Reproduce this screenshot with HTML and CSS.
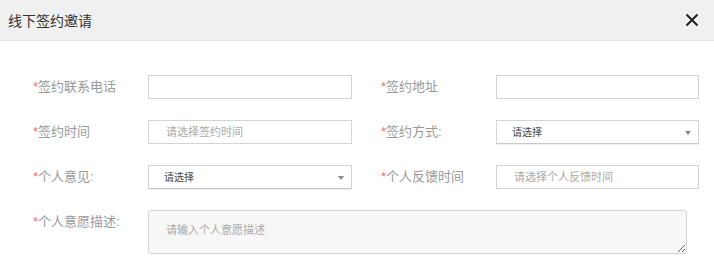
FILE: index.html
```html
<!DOCTYPE html>
<html lang="zh-CN">
<head>
    <meta charset="UTF-8">
    <meta name="viewport" content="width=device-width, initial-scale=1.0">
    <title>线下签约邀请</title>
    <link rel="stylesheet" href="styles.css">
</head>
<body>

    <div class="dialog">
        <!-- Dialog Header -->
        <div class="dialog-header">
            <h3>线下签约邀请</h3>
            <button class="close-btn" aria-label="关闭">
                <svg width="14" height="14" viewBox="0 0 14 14">
                    <path d="M1.5 1.5 L12.5 12.5 M12.5 1.5 L1.5 12.5" stroke="#222" stroke-width="2" fill="none"/>
                </svg>
            </button>
        </div>

        <!-- Form -->
        <form class="sign-form">
            <div class="field">
                <label><span class="req">*</span>签约联系电话</label>
                <input type="text" class="text-input">
            </div>
            <div class="field">
                <label><span class="req">*</span>签约地址</label>
                <input type="text" class="text-input">
            </div>

            <div class="field">
                <label><span class="req">*</span>签约时间</label>
                <input type="text" class="text-input date-input" placeholder="请选择签约时间">
            </div>
            <div class="field">
                <label><span class="req">*</span>签约方式:</label>
                <div class="select-wrap">
                    <select class="select-input">
                        <option>请选择</option>
                    </select>
                </div>
            </div>

            <div class="field">
                <label><span class="req">*</span>个人意见:</label>
                <div class="select-wrap">
                    <select class="select-input">
                        <option>请选择</option>
                    </select>
                </div>
            </div>
            <div class="field">
                <label><span class="req">*</span>个人反馈时间</label>
                <input type="text" class="text-input date-input" placeholder="请选择个人反馈时间">
            </div>

            <div class="field field-wide">
                <label><span class="req">*</span>个人意愿描述:</label>
                <textarea class="text-area" placeholder="请输入个人意愿描述"></textarea>
            </div>
        </form>
    </div>

</body>
</html>
```

FILE: styles.css
```css
/* General Styling */
body {
    margin: 0;
    padding: 0;
    background-color: #fff;
    font-family: "Liberation Sans", "Noto Sans CJK SC", sans-serif;
    color: #333;
}

/* Dialog Header */
.dialog-header {
    height: 40px;
    background-color: #f0f0f0;
    border-bottom: 1px solid #e4e4e4;
    display: flex;
    align-items: center;
    justify-content: space-between;
    padding: 0 15px 0 8px;
}

.dialog-header h3 {
    margin: 0;
    font-size: 14px;
    font-weight: normal;
    color: #333;
}

.close-btn {
    border: none;
    background: none;
    padding: 0;
    width: 14px;
    height: 14px;
    cursor: pointer;
    display: flex;
}

/* Form */
.sign-form {
    display: grid;
    grid-template-columns: 319px 318px;
    column-gap: 29px;
    row-gap: 21px;
    padding: 34px 0 0 33px;
}

.field {
    display: flex;
    align-items: center;
}

.field label {
    width: 115px;
    flex-shrink: 0;
    font-size: 13px;
    line-height: 24px;
    color: #999;
}

.req {
    color: #f56c6c;
}

.text-input {
    box-sizing: border-box;
    width: 204px;
    height: 24px;
    border: 1px solid #d4d4d4;
    border-radius: 0;
    padding: 0 17px;
    font-size: 11px;
    font-family: inherit;
    color: #333;
    outline: none;
}

.text-input::placeholder,
.text-area::placeholder {
    color: #aaa;
}

/* Select */
.select-wrap {
    position: relative;
    width: 204px;
    height: 24px;
}

.select-wrap::after {
    content: "";
    position: absolute;
    right: 8px;
    top: 11px;
    border-left: 3px solid transparent;
    border-right: 3px solid transparent;
    border-top: 4px solid #888;
    pointer-events: none;
}

.select-input {
    appearance: none;
    -webkit-appearance: none;
    box-sizing: border-box;
    width: 100%;
    height: 24px;
    border: 1px solid #d4d4d4;
    border-bottom-color: #c8c8c8;
    border-radius: 0;
    background-color: #fff;
    padding: 0 15px;
    font-size: 10px;
    font-family: inherit;
    color: #444;
    outline: none;
    box-shadow: 0 1px 1px rgba(0, 0, 0, 0.06);
}

/* Textarea row */
.field-wide {
    grid-column: 1 / 3;
    align-items: flex-start;
}

.text-area {
    box-sizing: border-box;
    width: 539px;
    height: 44px;
    border: 1px solid #d4d4d4;
    border-radius: 3px;
    background-color: #f7f7f7;
    padding: 10px 17px;
    font-size: 11px;
    font-family: inherit;
    color: #333;
    outline: none;
    resize: both;
}
```
